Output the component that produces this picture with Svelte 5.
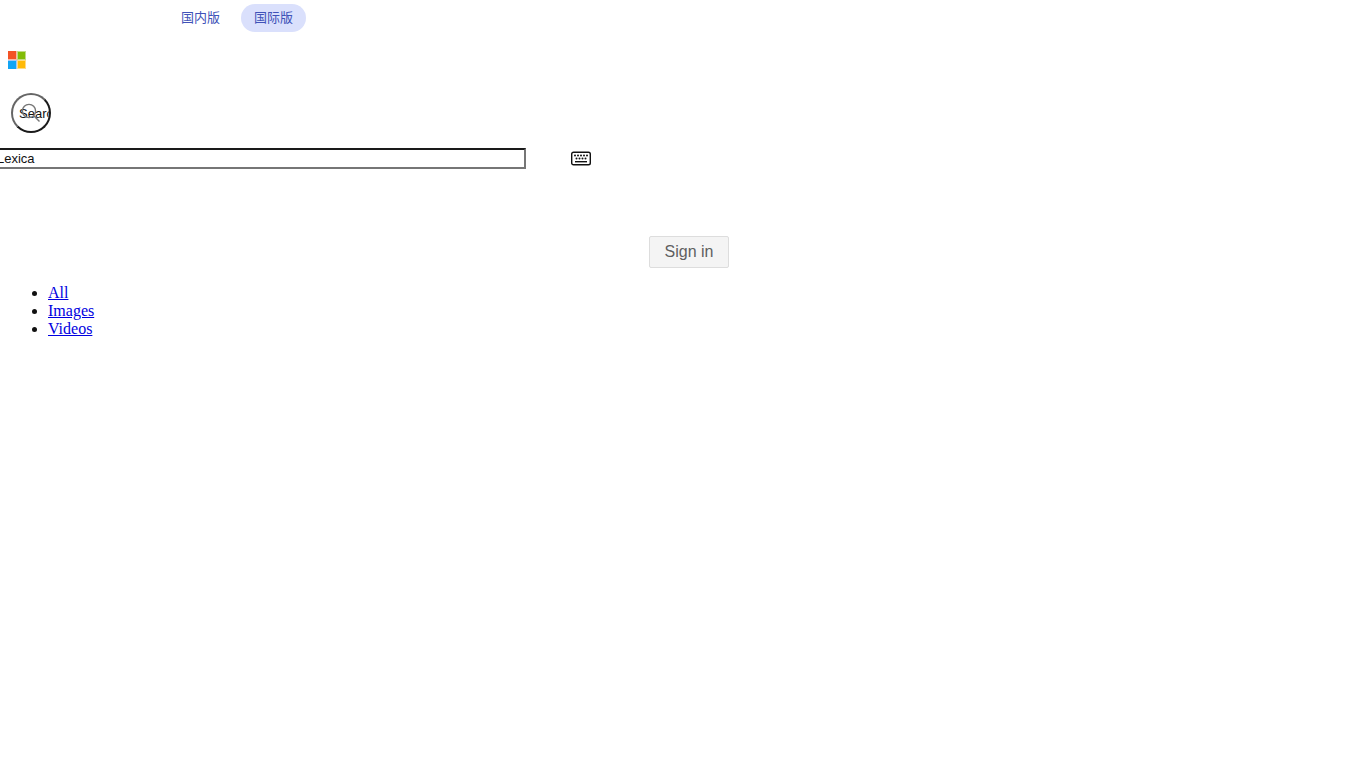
<script>
	let query = "Lexica";
	let international = true;

	const scopes = [
		{ name: "All", href: "#all" },
		{ name: "Images", href: "#images" },
		{ name: "Videos", href: "#videos" }
	];

	// key rows of the keyboard icon
	const topKeys = [3, 6, 9, 12, 15];
	const middleKeys = [4.5, 7.5, 10.5, 13.5];
</script>

<svelte:head>
	<title>{query} - Search</title>
</svelte:head>

<header>
	<div class="editions">
		<button type="button" class:active={!international} on:click={() => (international = false)}>国内版</button>
		<button type="button" class:active={international} on:click={() => (international = true)}>国际版</button>
	</div>

	<a class="logo" href="#home" aria-label="Home">
		<svg width="18" height="18" viewBox="0 0 18 18">
			<path fill="#f9b9a4" d="M0 0h9v9H0z" />
			<path fill="#c0da85" d="M9 0h9v9H9z" />
			<path fill="#a3c8f5" d="M0 9h9v9H0z" />
			<path fill="#ffdb85" d="M9 9h9v9H9z" />
			<path fill="#f35325" d="M0 0h8v8H0z" />
			<path fill="#81bc06" d="M10 1h7v7h-7z" />
			<path fill="#12a5f4" d="M0 10h8v8H0z" />
			<path fill="#ffba08" d="M10 10h7v7h-7z" />
		</svg>
	</a>

	<form on:submit|preventDefault>
		<button type="submit" class="search">
			<span>Search</span>
			<svg width="20" height="20" viewBox="0 0 20 20" aria-hidden="true">
				<circle cx="8" cy="8" r="6.6" />
				<path d="M13 13l5.5 5.5" />
			</svg>
		</button>
		<div class="field">
			<input type="text" aria-label="Enter your search term" bind:value={query} />
			<button type="button" class="keyboard" aria-label="Keyboard">
				<svg width="20" height="15" viewBox="0 0 20 15">
					<rect x="0.7" y="1.2" width="18.6" height="12.6" rx="1.8" fill="none" stroke="#111" stroke-width="1.4" />
					{#each topKeys as x}
						<rect {x} y="3.5" width="2" height="2" rx="1" fill="#111" />
					{/each}
					{#each middleKeys as x}
						<rect {x} y="6.5" width="2" height="2" rx="1" fill="#111" />
					{/each}
					<path d="M4 10.7h12" stroke="#111" stroke-width="1.4" />
				</svg>
			</button>
		</div>
	</form>

	<div class="account">
		<button type="button">Sign in</button>
	</div>

	<nav>
		<ul>
			{#each scopes as scope}
				<li><a href={scope.href}>{scope.name}</a></li>
			{/each}
		</ul>
	</nav>
</header>

<style>
	:global(body) {
		margin: 0;
		background: #fff;
		color: #111;
		font: 16px/18px "Liberation Serif", "Times New Roman", serif;
	}
	button {
		font-family: "Liberation Sans", Arial, sans-serif;
		cursor: pointer;
	}
	header {
		padding: 4px 8px;
	}
	.editions {
		display: flex;
		gap: 8px;
		padding-left: 160px;
	}
	.editions button {
		height: 28px;
		padding: 0 13px;
		border: 0;
		border-radius: 14px;
		background: none;
		color: #4052b8;
		font: 13px/28px "Liberation Sans", "Noto Sans CJK SC", sans-serif;
	}
	.editions .active {
		background: #dae0fc;
	}
	.logo {
		display: block;
		width: 18px;
		height: 18px;
		margin-top: 19px;
	}
	svg {
		display: block;
	}
	form {
		margin-top: 24px;
	}
	.search {
		position: relative;
		display: block;
		width: 40px;
		height: 40px;
		margin-left: 3px;
		padding: 0 6px;
		overflow: hidden;
		border: 2px solid;
		border-color: #666 #1a1a1a #1a1a1a #666;
		border-radius: 50%;
		background: #fff;
		color: #111;
		font-size: 13px;
		text-align: left;
	}
	.search svg {
		position: absolute;
		top: 8px;
		left: 8px;
		fill: none;
		stroke: #767676;
		stroke-width: 1.4;
	}
	.field {
		display: flex;
		align-items: center;
		gap: 45px;
		margin-top: 15px;
	}
	/* the box runs out past the left edge of the window */
	input {
		box-sizing: border-box;
		width: 566px;
		height: 21px;
		margin-left: -48px;
		padding: 0 2px 0 35px;
		border: 2px solid;
		border-color: #1a1a1a #767676 #767676 #1a1a1a;
		background: #fff;
		color: #111;
		font: 13px "Liberation Sans", Arial, sans-serif;
	}
	.keyboard {
		padding: 0;
		border: 0;
		background: none;
	}
	.account {
		display: flex;
		justify-content: center;
		margin-top: 67px;
		padding-left: 13px;
	}
	.account button {
		width: 80px;
		height: 32px;
		padding: 0;
		border: 1px solid #ddd;
		border-radius: 2px;
		background: #f4f4f4;
		color: #5f5f5f;
		font-size: 16px;
	}
	ul {
		margin: 16px 0;
		padding-left: 40px;
	}
	li a {
		color: #0000e0;
	}
</style>
